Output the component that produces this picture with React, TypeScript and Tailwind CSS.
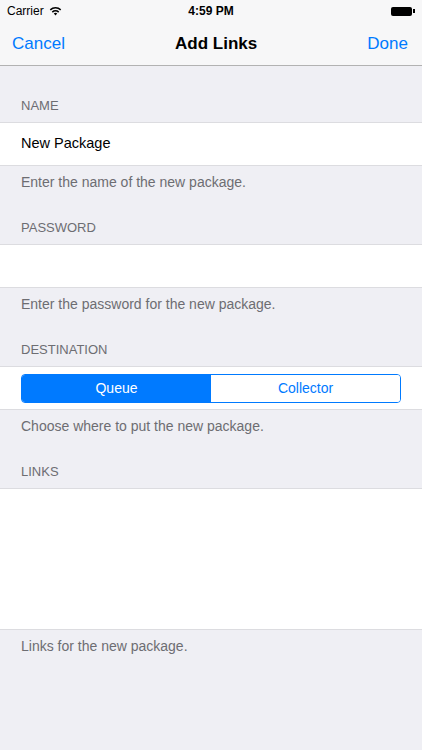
import React from 'react';

const Header = ({ text, first }: { text: string; first?: boolean }) => (
  <div className={`px-[21px] pb-[7px] text-[13px] leading-[18px] text-[#6d6d72] ${first ? 'pt-[31px]' : 'pt-[28px]'}`}>
    {text}
  </div>
);

const Footer = ({ text }: { text: string }) => (
  <div className="px-[21px] pt-[7px] text-[14px] leading-[18px] text-[#6d6d72]">{text}</div>
);

export default function App() {
  return (
    <div
      className="w-[422px] h-[750px] bg-[#efeff4] overflow-hidden"
      style={{ fontFamily: '"Liberation Sans", Arial, sans-serif' }}
    >
      {/* status + nav */}
      <div className="bg-[#f7f7f8] border-b border-[#b2b2b2]">
        <div className="h-[22px] flex items-center justify-between px-[7px] text-[12px] text-black">
          <div className="flex items-center gap-[5px] w-[100px]">
            <span>Carrier</span>
            <svg width="13" height="10" viewBox="0 0 13 10">
              <path d="M6.5 9.5 L4.8 7.6 A2.5 2.5 0 0 1 8.2 7.6 Z" fill="#000" />
              <path d="M3.3 6.1 A4.7 4.7 0 0 1 9.7 6.1" stroke="#000" strokeWidth="1.5" fill="none" />
              <path d="M1.3 3.9 A7.6 7.6 0 0 1 11.7 3.9" stroke="#000" strokeWidth="1.5" fill="none" />
            </svg>
          </div>
          <span className="font-bold">4:59 PM</span>
          <div className="w-[100px] flex justify-end items-center">
            <div className="w-[21px] h-[9px] bg-black rounded-[2px]" />
            <div className="w-[2px] h-[4px] bg-black ml-[1px]" />
          </div>
        </div>
        <div className="h-[43px] flex items-center justify-between px-[12px] text-[17px]">
          <span className="text-[#007aff]">Cancel</span>
          <span className="font-bold text-black">Add Links</span>
          <span className="text-[#007aff] pr-[2px]">Done</span>
        </div>
      </div>

      <Header text="NAME" first />
      <div className="h-[44px] bg-white border-y border-[#dcdce0] flex items-center px-[21px] text-[14.5px] text-black">
        New Package
      </div>
      <Footer text="Enter the name of the new package." />

      <Header text="PASSWORD" />
      <div className="h-[44px] bg-white border-y border-[#dcdce0]" />
      <Footer text="Enter the password for the new package." />

      <Header text="DESTINATION" />
      <div className="h-[44px] bg-white border-y border-[#dcdce0] flex items-center px-[21px]">
        <div className="flex-1 h-[29px] flex border border-[#007aff] rounded-[4px] overflow-hidden text-[14px]">
          <div className="flex-1 bg-[#007aff] text-white flex items-center justify-center">Queue</div>
          <div className="flex-1 bg-white text-[#007aff] flex items-center justify-center">Collector</div>
        </div>
      </div>
      <Footer text="Choose where to put the new package." />

      <Header text="LINKS" />
      <div className="h-[142px] bg-white border-y border-[#dcdce0]" />
      <Footer text="Links for the new package." />
    </div>
  );
}
